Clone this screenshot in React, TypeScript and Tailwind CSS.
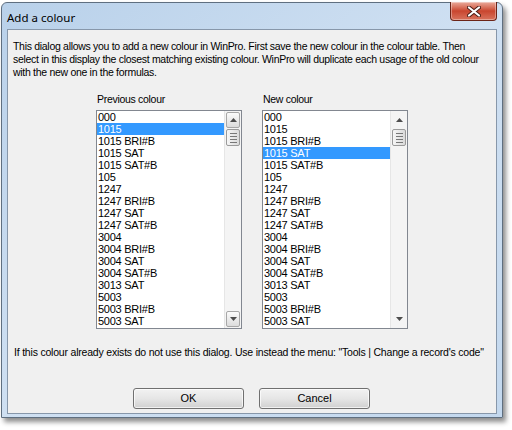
import React from "react";

const colours = [
  "000",
  "1015",
  "1015 BRI#B",
  "1015 SAT",
  "1015 SAT#B",
  "105",
  "1247",
  "1247 BRI#B",
  "1247 SAT",
  "1247 SAT#B",
  "3004",
  "3004 BRI#B",
  "3004 SAT",
  "3004 SAT#B",
  "3013 SAT",
  "5003",
  "5003 BRI#B",
  "5003 SAT",
];

const font = { fontFamily: '"Liberation Sans", Arial, sans-serif' };

// small triangle arrow used in the scrollbar buttons
const Arrow = ({ up }: { up?: boolean }) => (
  <svg width="7" height="4" viewBox="0 0 7 4">
    <path d={up ? "M0 4 L3.5 0 L7 4 Z" : "M0 0 L3.5 4 L7 0 Z"} fill="#4d4d4d" />
  </svg>
);

const ScrollButton = ({ up, framed }: { up?: boolean; framed?: boolean }) => (
  <div
    className={
      "h-[16px] mx-[1px] flex items-center justify-center rounded-[2px] " +
      (framed ? "border border-[#a7a7a7] bg-gradient-to-b from-[#fbfbfb] to-[#dcdcdc]" : "border border-transparent")
    }
  >
    <Arrow up={up} />
  </div>
);

const Scrollbar = ({ hovered }: { hovered?: boolean }) => (
  <div className="w-[17px] flex flex-col bg-[#f4f4f4] border-l border-[#e6e6e6] py-[1px]">
    <ScrollButton up framed={hovered} />
    <div className="h-[17px] mx-[1px] mt-[1px] rounded-[2px] border border-[#9a9a9a] bg-gradient-to-r from-[#f6f6f6] to-[#dadada] flex flex-col items-center justify-center gap-[2px]">
      <div className="w-[7px] h-[1px] bg-[#777]" />
      <div className="w-[7px] h-[1px] bg-[#777]" />
      <div className="w-[7px] h-[1px] bg-[#777]" />
      <div className="w-[7px] h-[1px] bg-[#777]" />
    </div>
    <div className="flex-1" />
    <ScrollButton framed={hovered} />
  </div>
);

const ListBox = ({ selected, hovered }: { selected: number; hovered?: boolean }) => (
  <div className="w-[146px] h-[219px] border border-[#828790] bg-white flex">
    <div className="flex-1 flex flex-col text-[11px] leading-[12px] tracking-[-0.25px] text-black">
      {colours.map((c, i) => (
        <div
          key={c}
          className={"h-[12px] pl-[1px] whitespace-nowrap " + (i === selected ? "bg-[#3399ff] text-white" : "")}
        >
          {c}
        </div>
      ))}
    </div>
    <Scrollbar hovered={hovered} />
  </div>
);

const WinButton = ({ label }: { label: string }) => (
  <button className="w-[111px] h-[21px] rounded-[3px] border border-[#707070] bg-gradient-to-b from-[#f2f2f2] via-[#e6e6e6] to-[#d0d0d0] text-[11px] text-black shadow-[inset_0_0_0_1px_rgba(255,255,255,0.7)]">
    {label}
  </button>
);

export default function App() {
  return (
    <div className="w-[512px] h-[430px] bg-white overflow-hidden pt-[2px] pl-[1px]" style={font}>
      <div className="w-[502px] h-[416px] rounded-t-[6px] border border-[#5f6f80] bg-gradient-to-br from-[#b9d1ea] via-[#cfe0f2] to-[#c3d8ee] shadow-[3px_4px_5px_rgba(0,0,0,0.45)] flex flex-col px-[5px]">
        <div className="h-[26px] flex justify-between">
          <div
            className="pt-[6px] text-[11.5px] text-black"
            style={{ fontFamily: '"Noto Sans", "Open Sans", sans-serif' }}
          >
            Add a colour
          </div>
          <div className="w-[47px] h-[19px] -mt-[1px] rounded-b-[4px] border border-[#6b2418] border-t-0 bg-gradient-to-b from-[#e9aa9b] via-[#c9452e] to-[#d8725c] flex items-center justify-center shadow-[inset_0_0_0_1px_rgba(255,255,255,0.35)]">
            <svg width="14" height="11" viewBox="0 0 14 11">
              <path d="M2 1.5 L12 9.5 M12 1.5 L2 9.5" stroke="#4a1c14" strokeWidth="4" strokeLinecap="round" />
              <path d="M2 1.5 L12 9.5 M12 1.5 L2 9.5" stroke="#ffffff" strokeWidth="2.2" strokeLinecap="round" />
            </svg>
          </div>
        </div>
        <div className="h-[385px] border border-[#8797aa] bg-[#f0f0f0] flex flex-col text-[10.5px] tracking-[-0.3px] text-black">
          <p className="pt-[10px] pl-[5px] leading-[13px] whitespace-nowrap">
            This dialog allows you to add a new colour in WinPro. First save the new colour in the colour table. Then
            <br />
            select in this display the closest matching existing colour. WinPro will duplicate each usage of the old colour
            <br />
            with the new one in the formulas.
          </p>
          <div className="flex gap-[20px] pl-[88px] mt-[14px]">
            <div className="flex flex-col">
              <div className="h-[13px] leading-[13px] mb-[4px] pl-[1px]">Previous colour</div>
              <ListBox selected={1} hovered />
            </div>
            <div className="flex flex-col">
              <div className="h-[13px] leading-[13px] mb-[4px] pl-[1px]">New colour</div>
              <ListBox selected={3} />
            </div>
          </div>
          <p className="mt-[17px] pl-[6px] leading-[13px] whitespace-nowrap tracking-[-0.2px]">
            If this colour already exists do not use this dialog. Use instead the menu: "Tools | Change a record's code"
          </p>
          <div className="flex gap-[15px] pl-[125px] mt-[29px] tracking-normal">
            <WinButton label="OK" />
            <WinButton label="Cancel" />
          </div>
        </div>
      </div>
    </div>
  );
}
